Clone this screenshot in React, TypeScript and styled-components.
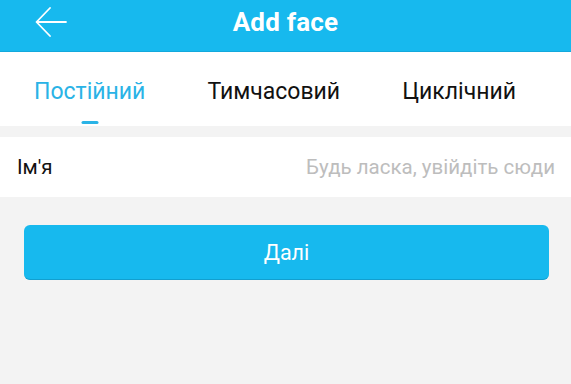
import { useState } from "react";
import styled, { createGlobalStyle } from "styled-components";

const GlobalStyle = createGlobalStyle`
  html, body {
    margin: 0;
    padding: 0;
    background: #f3f3f3;
    font-family: Roboto, "Noto Sans", "DejaVu Sans", sans-serif;
  }
`;

const tabs = ["Постійний", "Тимчасовий", "Циклічний"];

function App() {
  const [active, setActive] = useState(0);
  const [name, setName] = useState("");

  return (
    <>
      <GlobalStyle />
      <Page>
        <Header>
          <BackButton aria-label="back">
            <svg width="32" height="32" viewBox="0 0 32 32" fill="none">
              <path
                d="M31 15H2M15 1L1.5 15L15 29"
                stroke="#fff"
                strokeWidth="1.8"
                strokeLinecap="round"
                strokeLinejoin="round"
              />
            </svg>
          </BackButton>
          <Title>Add face</Title>
        </Header>
        <TabBar>
          {tabs.map((tab, i) => (
            <Tab key={tab} $active={i === active} onClick={() => setActive(i)}>
              {tab}
              <Underline $active={i === active} />
            </Tab>
          ))}
        </TabBar>
        <FieldRow>
          <Label>Ім'я</Label>
          <Input
            placeholder="Будь ласка, увійдіть сюди"
            value={name}
            onChange={(event) => setName(event.target.value)}
          />
        </FieldRow>
        <ButtonWrap>
          <NextButton>Далі</NextButton>
        </ButtonWrap>
      </Page>
    </>
  );
}

const Page = styled.div`
  width: 571px;
  height: 384px;
  background: #f3f3f3;
  display: flex;
  flex-direction: column;
  overflow: hidden;
`;

const Header = styled.div`
  flex: none;
  height: 52px;
  background: #17b9ee;
  border-bottom: 1px solid #13a9dc;
  display: flex;
  align-items: center;
  justify-content: center;
  position: relative;
  box-sizing: border-box;
  padding-bottom: 7px;
`;

const BackButton = styled.button`
  position: absolute;
  left: 35px;
  top: 7px;
  padding: 0;
  border: none;
  background: transparent;
  display: flex;
  cursor: pointer;
`;

const Title = styled.h1`
  margin: 0;
  color: #fff;
  font-size: 26px;
  font-weight: 700;
  letter-spacing: 0.2px;
`;

const TabBar = styled.div`
  flex: none;
  height: 74px;
  background: #fff;
  display: flex;
  justify-content: space-between;
  align-items: stretch;
  padding: 0 55px 0 34px;
`;

const Tab = styled.div<{ $active: boolean }>`
  position: relative;
  display: flex;
  align-items: center;
  padding-top: 4px;
  font-size: 23px;
  color: ${(p) => (p.$active ? "#2ab3e6" : "#111")};
  cursor: pointer;
`;

const Underline = styled.span<{ $active: boolean }>`
  display: ${(p) => (p.$active ? "block" : "none")};
  position: absolute;
  bottom: 2px;
  left: 50%;
  transform: translateX(-50%);
  width: 17px;
  height: 3px;
  border-radius: 2px;
  background: #2ab3e6;
`;

const FieldRow = styled.div`
  flex: none;
  margin-top: 11px;
  height: 60px;
  background: #fff;
  display: flex;
  align-items: center;
  padding: 0 16px 0 17px;
`;

const Label = styled.span`
  font-size: 20.5px;
  color: #111;
  white-space: nowrap;
`;

const Input = styled.input`
  flex: 1;
  min-width: 0;
  border: none;
  outline: none;
  background: transparent;
  text-align: right;
  font-family: inherit;
  font-size: 20.5px;
  color: #111;
  padding: 0;
  &::placeholder {
    color: #bdbdbd;
  }
`;

const ButtonWrap = styled.div`
  padding: 28px 22px 0 24px;
`;

const NextButton = styled.button`
  width: 100%;
  height: 55px;
  border: none;
  border-bottom: 1px solid #129fcf;
  border-radius: 6px;
  background: #17b9ee;
  color: #fff;
  font-family: inherit;
  font-size: 21.5px;
  cursor: pointer;
`;

export default App;
